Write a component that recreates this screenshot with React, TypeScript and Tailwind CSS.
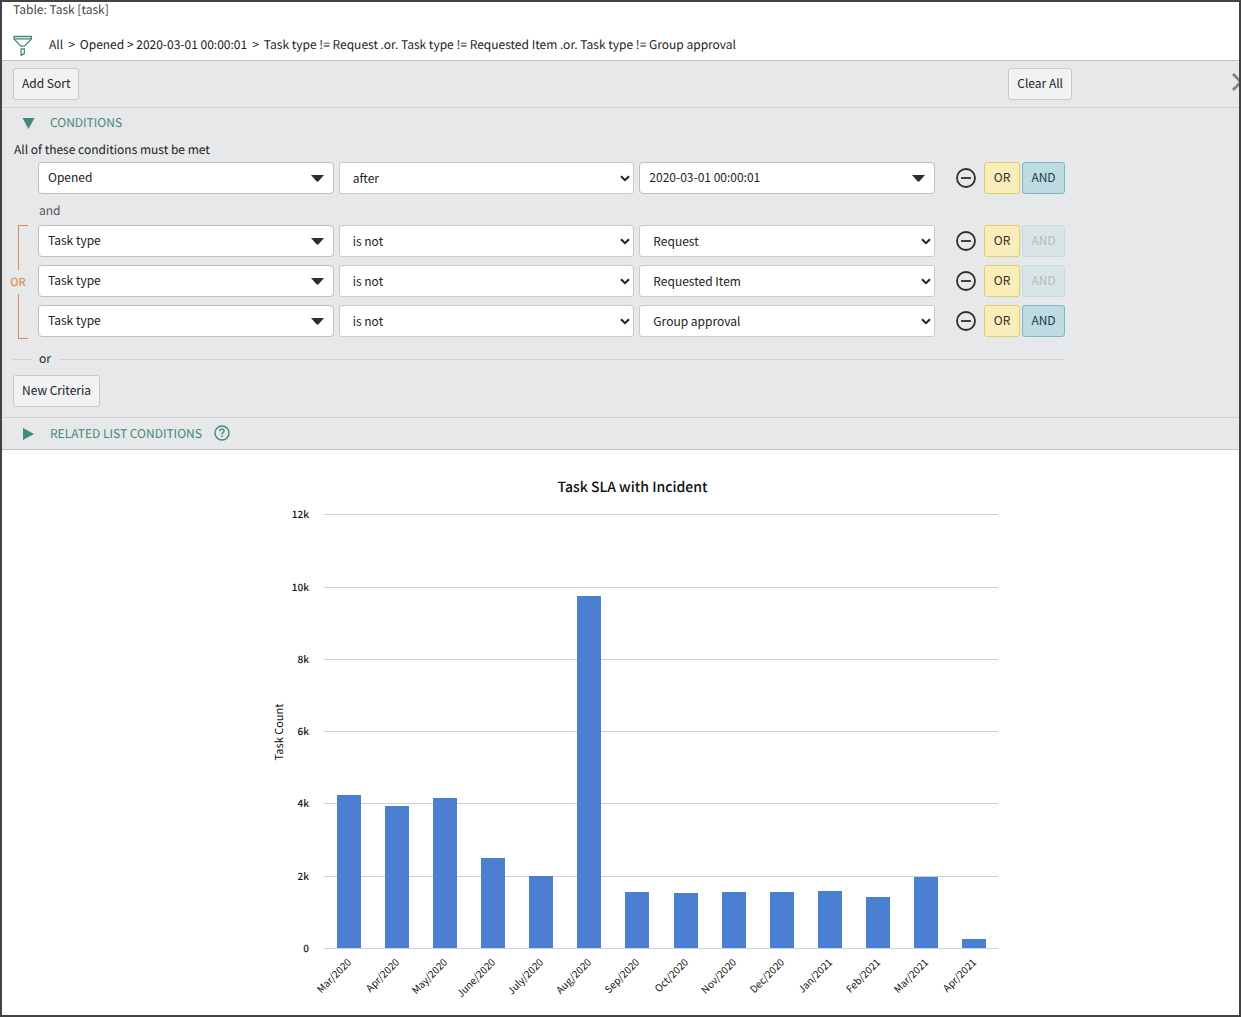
import { useState, type ReactNode } from 'react'

type Condition = {
  id: number
  field: string
  operator: string
  value: string
  isDate?: boolean
  andDisabled?: boolean
}

const OPENED: Condition = {
  id: 1,
  field: 'Opened',
  operator: 'after',
  value: '2020-03-01 00:00:01',
  isDate: true,
}

const TASK_TYPES: Condition[] = [
  { id: 2, field: 'Task type', operator: 'is not', value: 'Request', andDisabled: true },
  { id: 3, field: 'Task type', operator: 'is not', value: 'Requested Item', andDisabled: true },
  { id: 4, field: 'Task type', operator: 'is not', value: 'Group approval' },
]

const CHART_DATA = [
  { month: 'Mar/2020', count: 4240 },
  { month: 'Apr/2020', count: 3930 },
  { month: 'May/2020', count: 4155 },
  { month: 'June/2020', count: 2493 },
  { month: 'July/2020', count: 1994 },
  { month: 'Aug/2020', count: 9750 },
  { month: 'Sep/2020', count: 1551 },
  { month: 'Oct/2020', count: 1523 },
  { month: 'Nov/2020', count: 1551 },
  { month: 'Dec/2020', count: 1551 },
  { month: 'Jan/2021', count: 1579 },
  { month: 'Feb/2021', count: 1413 },
  { month: 'Mar/2021', count: 1967 },
  { month: 'Apr/2021', count: 249 },
]

function FunnelIcon() {
  return (
    <svg width="20" height="21" viewBox="0 0 20 21" fill="none" stroke="#43897a" strokeWidth="1.3">
      <path d="M1 1.500h17.400v2.400l-6.900 7.300H7.900L1 3.900z" />
      <path d="M1 3.900h17.400" />
      <path d="M8.100 13.800h3.200v4.800l-3.200 1.800z" />
    </svg>
  )
}

function Dropdown({
  label,
  value,
  options,
  caret = 'chevron',
}: {
  label: string
  value: string
  options: string[]
  caret?: 'chevron' | 'triangle'
}) {
  const [selected, setSelected] = useState(value)
  return (
    <div className="relative min-w-0 flex-1">
      <select
        aria-label={label}
        value={selected}
        onChange={(event) => setSelected(event.target.value)}
        className={
          caret === 'triangle'
            ? 'block h-8 w-full appearance-none rounded border border-[#bcbfc3] bg-white pr-7 pb-0.5 pl-[9px]'
            : 'block h-8 w-full appearance-none rounded-[3px] border border-[#c8cacd] bg-white pr-6 pl-[13px]'
        }
      >
        {options.map((option) => (
          <option key={option}>{option}</option>
        ))}
      </select>
      {caret === 'triangle' ? (
        <svg className="pointer-events-none absolute top-[13px] right-[10px]" width="13" height="7" viewBox="0 0 13 7">
          <path d="M0 0h13L7.500 6.300q-1 .9-2 0z" fill="#2e2e2e" />
        </svg>
      ) : (
        <svg className="pointer-events-none absolute top-[13px] right-1" width="10" height="7" viewBox="0 0 10 7">
          <path d="M1 1.200l4 4 4-4" fill="none" stroke="#222" strokeWidth="2" />
        </svg>
      )}
    </div>
  )
}

function ConditionRow({ condition }: { condition: Condition }) {
  const { field, operator, value, isDate, andDisabled } = condition
  return (
    <div className="flex items-center">
      <div className="flex min-w-0 flex-1 gap-[5px]">
        <Dropdown label="Field" value={field} options={['Opened', 'Task type']} caret="triangle" />
        <Dropdown
          label="Operator"
          value={operator}
          options={isDate ? ['after', 'before', 'on'] : ['is', 'is not']}
        />
        <Dropdown
          label="Value"
          value={value}
          options={isDate ? [value] : ['Request', 'Requested Item', 'Group approval']}
          caret={isDate ? 'triangle' : 'chevron'}
        />
      </div>
      <button type="button" aria-label="Remove condition" className="ml-5 p-px">
        <svg width="20" height="20" viewBox="0 0 20 20" fill="none" stroke="#2e2e2e" strokeWidth="1.800">
          <circle cx="10" cy="10" r="9" />
          <path d="M5 10h10" />
        </svg>
      </button>
      <button
        type="button"
        className="ml-[7px] h-8 w-9 rounded-[3px] border border-[#e0cf6c] bg-[#f9edb9] pb-0.5 text-[#2e2e2e]"
      >
        OR
      </button>
      <button
        type="button"
        disabled={andDisabled}
        className="ml-0.5 h-8 w-[43px] rounded-[3px] border border-[#7fb6c4] bg-[#bddbe3] pb-0.5 text-[#1f3b44] disabled:border-[#c5dbe0] disabled:bg-[#d9e4e6] disabled:text-[#b0bcbf]"
      >
        AND
      </button>
    </div>
  )
}

function PanelButton({ children }: { children: ReactNode }) {
  return (
    <button type="button" className="h-8 rounded-[3px] border border-[#c6c9cc] bg-[#f1f2f4] px-2 pb-0.5">
      {children}
    </button>
  )
}

// Plot runs from x=57 to the right edge, with the zero line at y=445
function BarChart() {
  const left = 57
  const right = 731
  const zero = 445
  const step = (right - left) / CHART_DATA.length
  const ticks = [0, 2, 4, 6, 8, 10, 12]
  const toY = (count: number) => Math.round(zero - (count / 12000) * 433.6)

  return (
    <svg
      className="block w-[731px] max-w-full"
      viewBox="0 0 731 502"
      role="img"
      aria-label="Task count per month"
      fill="#111"
      fontSize="10"
    >
      {ticks.map((tick) => (
        <g key={tick}>
          <rect x={left} y={toY(tick * 1000)} width={right - left} height="1" fill={tick ? '#cfcfcf' : '#ccd3e3'} />
          <text x="42" y={toY(tick * 1000) + 4} textAnchor="end" fontWeight="500">
            {tick ? `${tick}k` : '0'}
          </text>
        </g>
      ))}
      {CHART_DATA.map(({ month, count }, index) => {
        const x = Math.floor(left + step * index + step / 2 - 11)
        return (
          <g key={month}>
            <rect x={x} y={toY(count)} width="24" height={zero - toY(count)} fill="#4a7fd1" />
            <text textAnchor="end" transform={`translate(${x + 15} 460) rotate(-45)`}>
              {month}
            </text>
          </g>
        )
      })}
      <text textAnchor="middle" fontSize="11" transform="translate(16 229) rotate(-90)">
        Task Count
      </text>
    </svg>
  )
}

export default function App() {
  return (
    <div className="flex min-h-screen flex-col overflow-hidden border-2 border-[#434343] bg-white font-['Noto_Sans_CJK_SC',sans-serif] text-[12px] leading-4 text-[#222] [text-rendering:geometricPrecision]">
      <header className="h-[59px] border-b border-[#bfc2c5]">
        <p className="pl-[11px] text-[#444]">Table: Task [task]</p>
        <nav className="mt-[17px] flex h-5 items-center pl-[11px]" aria-label="Filter breadcrumb">
          <button type="button" aria-label="Toggle filter">
            <FunnelIcon />
          </button>
          <div className="ml-4 flex gap-[5px]">
            <a href="#all">All</a>
            <span>&gt;</span>
            <a href="#opened">Opened &gt; 2020-03-01 00:00:01</a>
            <span>&gt;</span>
            <a href="#task-type">
              Task type != Request .or. Task type != Requested Item .or. Task type != Group approval
            </a>
          </div>
        </nav>
      </header>

      <section className="border-b border-[#bfc2c5] bg-[#e7e8ea]">
        <div className="flex h-[47px] items-center border-b border-[#cfd1d4]">
          <div className="flex max-w-[1070px] flex-1 justify-between pl-[11px]">
            <PanelButton>Add Sort</PanelButton>
            <PanelButton>Clear All</PanelButton>
          </div>
          <button type="button" aria-label="Close filter" className="-mr-3 mb-1 ml-auto">
            <svg width="20" height="20" viewBox="0 0 20 20" fill="none" stroke="#858688" strokeWidth="3">
              <path d="M2 2l16 16M18 2L2 18" />
            </svg>
          </button>
        </div>

        <div className="max-w-[1063px]">
          <h2 className="flex h-[30px] items-center pl-5 text-[#43897a]">
            <svg className="mr-[15px]" width="13" height="11" viewBox="0 0 13 11" fill="#43897a">
              <path d="M.5 0h12l-6 11z" />
            </svg>
            CONDITIONS
          </h2>
          <p className="mt-1 pl-3">All of these conditions must be met</p>
          <div className="mt-1 pl-9">
            <ConditionRow condition={OPENED} />
            <p className="pt-[9px] pb-1.5 pl-px text-[#555]">and</p>
          </div>
          <div className="flex">
            <div className="flex w-9 flex-col text-[#e58e4f]">
              <div className="ml-4 w-[10px] flex-1 border-t border-l border-[#e08a50]" />
              <span className="w-8 py-1 text-center text-[11px] font-medium">OR</span>
              <div className="ml-4 w-[10px] flex-1 border-b border-l border-[#e08a50]" />
            </div>
            <div className="flex min-w-0 flex-1 flex-col gap-2 pb-0.5">
              {TASK_TYPES.map((condition) => (
                <ConditionRow key={condition.id} condition={condition} />
              ))}
            </div>
          </div>
          <div className="mt-3 flex items-center pl-[11px]">
            <div className="h-px w-[18px] bg-[#cfd1d4]" />
            <span className="mx-2">or</span>
            <div className="h-px flex-1 bg-[#cfd1d4]" />
          </div>
          <div className="mt-2 pb-[10px] pl-[11px]">
            <PanelButton>New Criteria</PanelButton>
          </div>
        </div>

        <h2 className="flex h-8 items-center border-t border-[#cfd1d4] pl-5 text-[#43897a]">
          <svg className="mr-[15px]" width="13" height="12" viewBox="0 0 13 12" fill="#43897a">
            <path d="M1 0l11 6-11 6z" />
          </svg>
          RELATED LIST CONDITIONS
          <button type="button" aria-label="Help" className="mb-0.5 ml-3">
            <svg width="16" height="16" viewBox="0 0 16 16" fill="none" stroke="#43897a" strokeWidth="1.400">
              <circle cx="8" cy="8" r="7" />
              <path d="M5.900 6.300c0-1.400.9-2.200 2.100-2.200s2.100.8 2.100 1.900c0 1.500-2.100 1.700-2.100 3.400" />
              <path d="M8 10.600v1.500" />
            </svg>
          </button>
        </h2>
      </section>

      <section className="flex flex-1 flex-col items-center pt-[27px] pl-6">
        <h2 className="mb-1.5 text-[14px] leading-5 font-medium text-[#111]">Task SLA with Incident</h2>
        <BarChart />
      </section>
    </div>
  )
}
